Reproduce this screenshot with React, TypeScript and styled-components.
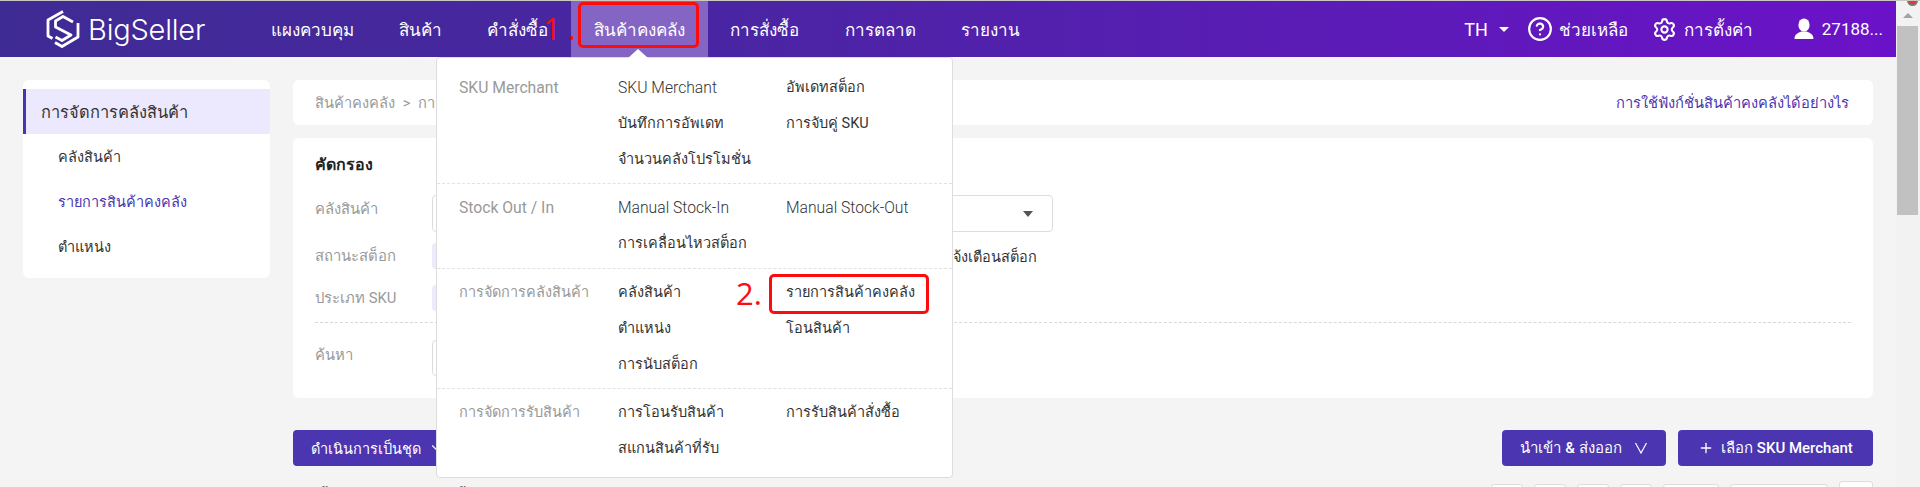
import React from 'react';
import styled, { createGlobalStyle } from 'styled-components';
import { ChevronDown, CircleHelp, Plus, Settings } from 'lucide-react';

const GlobalStyle = createGlobalStyle`
  html, body {
    margin: 0;
    padding: 0;
    height: 487px;
    overflow: hidden;
    background: #f4f4f4;
    font-family: Roboto, "Noto Sans", sans-serif;
    font-size: 14px;
    color: #333;
  }
  * {
    box-sizing: border-box;
  }
`;

const Viewport = styled.div`
  display: flex;
  height: 487px;
  overflow: hidden;
  border-top: 1px solid #c9c9c2;
  position: relative;
`;

const Page = styled.div`
  width: 1896px;
  flex-shrink: 0;
`;

const ScrollTrack = styled.div`
  flex: 1;
  display: flex;
  flex-direction: column;
  align-items: center;
  background: #f2f2f2;
  padding: 12px 2px 0 1px;
`;

const ScrollArrow = styled.div`
  width: 0;
  height: 0;
  border-left: 5px solid transparent;
  border-right: 5px solid transparent;
  border-bottom: 5px solid #a3a3a3;
  margin-bottom: 8px;
`;

const ScrollThumb = styled.div`
  width: 21px;
  height: 189px;
  background: #c1c1c1;
`;

const RecordDot = styled.div`
  position: absolute;
  top: -6px;
  right: 2px;
  width: 11px;
  height: 11px;
  border-radius: 50%;
  background: #f2312a;
  border: 2px solid #777;
`;

const Header = styled.header`
  height: 56px;
  display: flex;
  align-items: stretch;
  position: relative;
  padding-left: 46px;
  background: linear-gradient(90deg, #3f2b94 0%, #4b25a4 40%, #6b12c8 100%);
  color: #fff;
`;

const Logo = styled.div`
  display: flex;
  align-items: center;
  gap: 8px;
  width: 202px;
`;

const LogoText = styled.span`
  font-family: Inter, sans-serif;
  font-weight: 300;
  font-size: 29px;
  letter-spacing: -0.2px;
`;

const Nav = styled.nav`
  display: flex;
`;

const NavItem = styled.div<{ $active?: boolean }>`
  position: relative;
  display: flex;
  align-items: center;
  padding: 0 22.7px;
  font-size: 17px;
  font-weight: 500;
  white-space: nowrap;
  background: ${(p) => (p.$active ? '#8565c4' : 'transparent')};
`;

const RedBox = styled.div`
  position: absolute;
  border: 3px solid #fb0d0d;
  border-radius: 5px;
  pointer-events: none;
`;

const NavRedBox = styled(RedBox)`
  left: 7px;
  top: 1px;
  width: 121px;
  height: 46px;
`;

const RedNumber = styled.span`
  position: absolute;
  font-family: "Open Sans", sans-serif;
  font-weight: 400;
  font-size: 31px;
  line-height: 34px;
  color: #fb0d0d;
`;

const NavNumber = styled(RedNumber)`
  left: -28px;
  top: 10px;
  letter-spacing: 7px;
`;

const HeaderRight = styled.div`
  margin-left: auto;
  display: flex;
  align-items: center;
  padding-right: 13px;
  font-size: 17px;
  font-weight: 500;
`;

const HeaderAction = styled.div<{ $gap: number; $left: number }>`
  display: flex;
  align-items: center;
  gap: ${(p) => p.$gap}px;
  margin-left: ${(p) => p.$left}px;
`;

const LangLabel = styled.span`
  font-size: 18px;
  font-weight: 400;
`;

const LangCaret = styled.span`
  width: 0;
  height: 0;
  border-left: 5px solid transparent;
  border-right: 5px solid transparent;
  border-top: 5px solid #fff;
`;

const UserName = styled.span`
  font-size: 17px;
  font-weight: 400;
`;

const DropMenu = styled.div`
  position: absolute;
  top: 56px;
  left: 436px;
  width: 517px;
  height: 421px;
  padding-top: 5.6px;
  background: #fff;
  border: 1px solid #ddd;
  border-radius: 4px;
  color: #333;
  font-size: 14.5px;
  font-weight: 400;
  z-index: 5;

  &::before {
    content: '';
    position: absolute;
    top: -9px;
    left: 191px;
    border-left: 10px solid transparent;
    border-right: 10px solid transparent;
    border-bottom: 9px solid #fff;
  }
`;

const MenuSection = styled.div`
  display: grid;
  grid-template-columns: 159px 168px 1fr;
  padding: 6px 0 5.5px 22px;
  border-bottom: 1px dashed #e2e2e2;

  &:last-child {
    border-bottom: 0;
  }
`;

const MenuLabel = styled.div<{ $latin: boolean }>`
  color: #999;
  line-height: 36px;
  font-size: ${(p) => (p.$latin ? '15.7px' : '14.5px')};
`;

const MenuLinks = styled.div`
  grid-column: 2 / 4;
  display: grid;
  grid-template-columns: 168px 1fr;
  grid-auto-rows: 36px;
  line-height: 36px;
`;

const MenuLink = styled.div<{ $latin: boolean }>`
  position: relative;
  white-space: nowrap;
  font-size: ${(p) => (p.$latin ? '15.7px' : '14.5px')};
  font-weight: ${(p) => (p.$latin ? 300 : 400)};
`;

const LinkRedBox = styled(RedBox)`
  left: -17px;
  top: -1px;
  width: 160px;
  height: 40px;
`;

const LinkNumber = styled(RedNumber)`
  left: -50px;
  top: 1px;
`;

const Content = styled.div`
  display: flex;
  gap: 23px;
  padding: 23px 23px 0;
`;

const SideCard = styled.aside`
  width: 247px;
  flex-shrink: 0;
  height: 198px;
  padding: 9px 0;
  background: #fff;
  border-radius: 6px;
`;

const SideGroup = styled.div`
  height: 45px;
  display: flex;
  align-items: center;
  padding-left: 15px;
  background: #ece8fd;
  border-left: 3px solid #4b33b0;
  font-size: 16.4px;
  color: #333;
`;

const SideItem = styled.div<{ $active?: boolean }>`
  height: 45px;
  display: flex;
  align-items: center;
  padding-left: 35px;
  color: ${(p) => (p.$active ? '#4a35b0' : '#333')};
  font-size: 14.5px;
`;

const MainColumn = styled.main`
  flex: 1;
  min-width: 0;
`;

const Breadcrumb = styled.div`
  height: 45px;
  display: flex;
  align-items: center;
  justify-content: space-between;
  padding: 0 24px 0 22px;
  background: #fff;
  border-radius: 6px;
  color: #999;
  font-size: 14.7px;
  word-spacing: 4px;
`;

const HelpLink = styled.a`
  color: #4a35b0;
  font-size: 14.7px;
`;

const FilterCard = styled.section`
  margin-top: 13px;
  padding: 16px 22px 22px;
  background: #fff;
  border-radius: 6px;
`;

const FilterTitle = styled.div`
  height: 22px;
  line-height: 22px;
  margin-bottom: 19px;
  font-size: 16px;
  font-weight: 700;
  color: #222;
`;

const FilterRow = styled.div<{ $top?: number; $height: number }>`
  display: flex;
  align-items: center;
  height: ${(p) => p.$height}px;
  margin-top: ${(p) => p.$top ?? 0}px;
`;

const FilterLabel = styled.label<{ $lift?: number }>`
  width: 117px;
  flex-shrink: 0;
  margin-bottom: ${(p) => p.$lift ?? 0}px;
  color: #999;
  font-size: 14.8px;
`;

const SelectBox = styled.div`
  width: 621px;
  height: 37px;
  display: flex;
  align-items: center;
  justify-content: flex-end;
  padding-right: 19px;
  border: 1px solid #ddd;
  border-radius: 4px;
`;

const SelectCaret = styled.span`
  width: 0;
  height: 0;
  border-left: 5px solid transparent;
  border-right: 5px solid transparent;
  border-top: 6px solid #555;
`;

const ChipList = styled.div`
  width: 605px;
  display: flex;
  align-items: center;
  justify-content: space-between;
  font-size: 14.5px;
`;

const Chip = styled.span`
  height: 26px;
  line-height: 26px;
  padding: 0 12px;
  background: #eeeafc;
  border-radius: 4px;
  color: #4a35b0;
  font-size: 14.5px;
`;

const Dashed = styled.div`
  margin-top: 11px;
  border-top: 1px dashed #d8d8d8;
`;

const SearchBox = styled.div`
  width: 400px;
  height: 36px;
  border: 1px solid #ddd;
  border-radius: 4px;
`;

const ActionRow = styled.div`
  margin-top: 32px;
  display: flex;
  align-items: center;
  gap: 12px;
`;

const PrimaryButton = styled.button<{ $width: number; $size?: number; $gap?: number }>`
  width: ${(p) => p.$width}px;
  height: 36px;
  display: inline-flex;
  align-items: center;
  justify-content: center;
  gap: ${(p) => p.$gap ?? 7}px;
  background: #4b35b0;
  border: 0;
  border-radius: 4px;
  color: #fff;
  font-family: inherit;
  font-size: ${(p) => p.$size ?? 15}px;
  font-weight: 500;
  white-space: nowrap;

  &:first-child {
    margin-right: auto;
  }
`;

const TableBar = styled.div`
  margin-top: 15px;
  display: flex;
  align-items: flex-start;
`;

const TableSummary = styled.div`
  flex: 1;
  padding: 4px 0 0 25px;
  font-size: 14px;
  white-space: nowrap;
`;

const Pager = styled.div`
  display: flex;
  gap: 11px;
`;

const PagerBox = styled.div<{ $width: number; $raised?: boolean }>`
  width: ${(p) => p.$width}px;
  height: 30px;
  margin-top: ${(p) => (p.$raised ? 0 : 3)}px;
  background: #fff;
  border: 1px solid #ddd;
  border-radius: 3px;
`;

const navItems = ['แผงควบคุม', 'สินค้า', 'คำสั่งซื้อ', 'สินค้าคงคลัง', 'การสั่งซื้อ', 'การตลาด', 'รายงาน'];

const menuSections = [
  {
    label: 'SKU Merchant',
    links: ['SKU Merchant', 'อัพเดทสต็อก', 'บันทึกการอัพเดท', 'การจับคู่ SKU', 'จำนวนคลังโปรโมชั่น'],
  },
  {
    label: 'Stock Out / In',
    links: ['Manual Stock-In', 'Manual Stock-Out', 'การเคลื่อนไหวสต็อก'],
  },
  {
    label: 'การจัดการคลังสินค้า',
    links: ['คลังสินค้า', 'รายการสินค้าคงคลัง', 'ตำแหน่ง', 'โอนสินค้า', 'การนับสต็อก'],
  },
  {
    label: 'การจัดการรับสินค้า',
    links: ['การโอนรับสินค้า', 'การรับสินค้าสั่งซื้อ', 'สแกนสินค้าที่รับ'],
  },
];

const pagerWidths = [32, 32, 32, 32, 56, 98];

// Latin text in the reference runs wider than the Thai next to it
const isLatin = (text: string) => /^[A-Za-z /-]+$/.test(text);

const BigSellerMark = () => (
  <svg width="34" height="38" viewBox="0 0 34 38" fill="none" stroke="#fff" strokeWidth="2.8" strokeLinejoin="round">
    <path d="M17 1.5 L2 10 V26 L6.5 28.5" />
    <path d="M27 12 L17 6.5 L9.5 11 V17 L25 25 L16 30.5 L9.5 27" />
    <path d="M32 13 V27 L16 36.5 L9 32.5" />
  </svg>
);

const UserGlyph = () => (
  <svg width="20" height="22" viewBox="0 0 20 22" fill="#fff">
    <ellipse cx="10" cy="7" rx="5.6" ry="6.6" />
    <path d="M0.5 21 C0.5 16 4 15 7.5 13.5 H12.5 C16 15 19.5 16 19.5 21 Z" />
  </svg>
);

const ThinChevron = () => (
  <svg width="14" height="12" viewBox="0 0 14 12" fill="none" stroke="#fff" strokeWidth="1.2">
    <path d="M1.5 1 L7 11 L12.5 1" />
  </svg>
);

const App: React.FC = () => {
  return (
    <>
      <GlobalStyle />
      <Viewport>
        <Page>
          <Header>
            <Logo>
              <BigSellerMark />
              <LogoText>BigSeller</LogoText>
            </Logo>
            <Nav>
              {navItems.map((item) => (
                <NavItem key={item} $active={item === 'สินค้าคงคลัง'}>
                  {item}
                  {item === 'สินค้าคงคลัง' && (
                    <>
                      <NavRedBox />
                      <NavNumber>1.</NavNumber>
                    </>
                  )}
                </NavItem>
              ))}
            </Nav>
            <HeaderRight>
              <HeaderAction $gap={11} $left={0}>
                <LangLabel>TH</LangLabel>
                <LangCaret />
              </HeaderAction>
              <HeaderAction $gap={6} $left={18}>
                <CircleHelp size={26} strokeWidth={2} />
                ช่วยเหลือ
              </HeaderAction>
              <HeaderAction $gap={7} $left={24}>
                <Settings size={25} strokeWidth={2} />
                การตั้งค่า
              </HeaderAction>
              <HeaderAction $gap={8} $left={41}>
                <UserGlyph />
                <UserName>27188...</UserName>
              </HeaderAction>
            </HeaderRight>
            <DropMenu>
              {menuSections.map((section) => (
                <MenuSection key={section.label}>
                  <MenuLabel $latin={isLatin(section.label)}>{section.label}</MenuLabel>
                  <MenuLinks>
                    {section.links.map((link) => (
                      <MenuLink key={link} $latin={isLatin(link)}>
                        {link}
                        {link === 'รายการสินค้าคงคลัง' && (
                          <>
                            <LinkRedBox />
                            <LinkNumber>2.</LinkNumber>
                          </>
                        )}
                      </MenuLink>
                    ))}
                  </MenuLinks>
                </MenuSection>
              ))}
            </DropMenu>
          </Header>
          <Content>
            <SideCard>
              <SideGroup>การจัดการคลังสินค้า</SideGroup>
              <SideItem>คลังสินค้า</SideItem>
              <SideItem $active>รายการสินค้าคงคลัง</SideItem>
              <SideItem>ตำแหน่ง</SideItem>
            </SideCard>
            <MainColumn>
              <Breadcrumb>
                <span>สินค้าคงคลัง &gt; การจัดการคลังสินค้า</span>
                <HelpLink>การใช้ฟังก์ชั่นสินค้าคงคลังได้อย่างไร</HelpLink>
              </Breadcrumb>
              <FilterCard>
                <FilterTitle>คัดกรอง</FilterTitle>
                <FilterRow $height={37}>
                  <FilterLabel $lift={10}>คลังสินค้า</FilterLabel>
                  <SelectBox>
                    <SelectCaret />
                  </SelectBox>
                </FilterRow>
                <FilterRow $top={11} $height={26}>
                  <FilterLabel>สถานะสต็อก</FilterLabel>
                  <ChipList>
                    <Chip>ทั้งหมด</Chip>
                    <span>ถึงจุดแจ้งเตือนสต็อก</span>
                  </ChipList>
                </FilterRow>
                <FilterRow $top={16} $height={26}>
                  <FilterLabel>ประเภท SKU</FilterLabel>
                  <Chip>ทั้งหมด</Chip>
                </FilterRow>
                <Dashed />
                <FilterRow $top={17} $height={36}>
                  <FilterLabel $lift={6}>ค้นหา</FilterLabel>
                  <SearchBox />
                </FilterRow>
              </FilterCard>
              <ActionRow>
                <PrimaryButton $width={170} $size={14.5}>
                  ดำเนินการเป็นชุด
                  <ChevronDown size={18} strokeWidth={1.5} />
                </PrimaryButton>
                <PrimaryButton $width={164} $gap={12}>
                  นำเข้า &amp; ส่งออก
                  <ThinChevron />
                </PrimaryButton>
                <PrimaryButton $width={195}>
                  <Plus size={16} strokeWidth={2} />
                  เลือก SKU Merchant
                </PrimaryButton>
              </ActionRow>
              <TableBar>
                <TableSummary>ทั้งหมด สินค้าที่มีสต็อก ทั้งหมด สินค้าที่มีสต็อก</TableSummary>
                <Pager>
                  {pagerWidths.map((width, index) => (
                    <PagerBox key={index} $width={width} />
                  ))}
                  <PagerBox $width={34} $raised />
                </Pager>
              </TableBar>
            </MainColumn>
          </Content>
        </Page>
        <ScrollTrack>
          <ScrollArrow />
          <ScrollThumb />
        </ScrollTrack>
        <RecordDot />
      </Viewport>
    </>
  );
};

export default App;
